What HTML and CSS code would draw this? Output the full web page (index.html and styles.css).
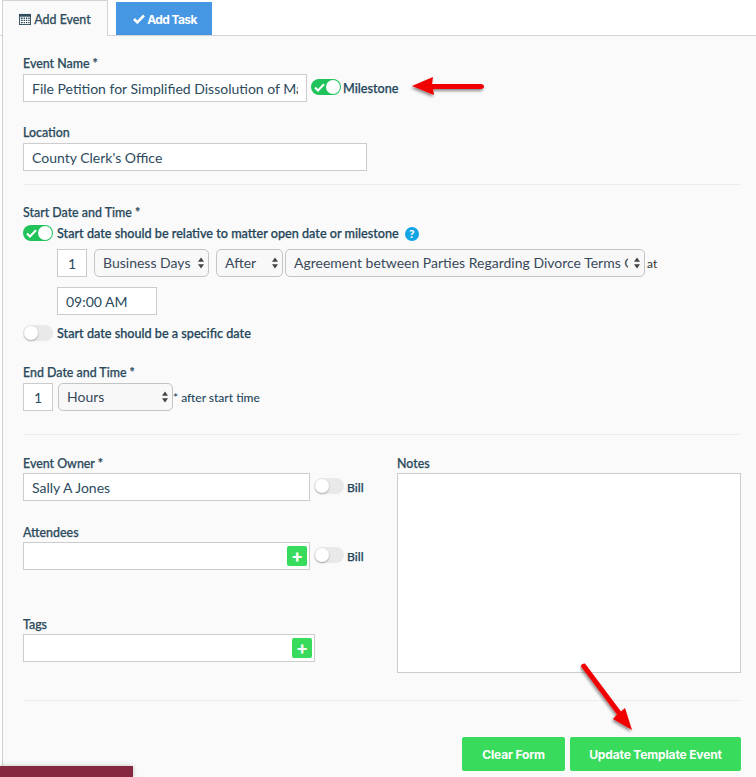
FILE: index.html
```html
<!DOCTYPE html>
<html lang="en">
<head>
<meta charset="utf-8">
<title>Add Event</title>
<link rel="stylesheet" href="styles.css">
</head>
<body>
<div class="page">
  <nav class="tabs">
    <a class="tab tab-active">
      <svg class="tab-icon" viewBox="0 0 13 13" width="12" height="12"><path fill="#2f4c5e" d="M0 1h13v12H0z"/><path fill="#fff" d="M1 4h11v8H1z"/><path fill="#2f4c5e" d="M2 5h2v1.500H2zM5 5h1.500v1.500H5zM7.500 5H9v1.500H7.500zM10 5h1.500v1.500H10zM2 7.300h2v1.500H2zM5 7.300h1.500v1.500H5zM7.500 7.300H9v1.500H7.500zM10 7.300h1.500v1.500H10zM2 9.700h2v1.500H2zM5 9.700h1.500v1.500H5zM7.500 9.700H9v1.500H7.500zM10 9.700h1.500v1.500H10z"/></svg>
      Add Event
    </a>
    <a class="tab tab-blue">
      <svg class="tab-icon" viewBox="0 0 12 10" width="12" height="10"><path fill="none" stroke="#fff" stroke-width="2.600" d="M1 5l3.300 3.300L11 1.500"/></svg>
      Add Task
    </a>
  </nav>
  <main class="panel">
    <div class="label first">Event Name *</div>
    <div class="row row-name">
      <input class="input w-name" value="File Petition for Simplified Dissolution of Marriage">
      <span class="toggle on"><svg viewBox="0 0 12 10" width="11" height="9"><path fill="none" stroke="#fff" stroke-width="2.400" d="M1 5l3.300 3.300L11 1.500"/></svg><i></i></span>
      <span class="opt">Milestone</span>
    </div>
    <div class="label gap-field">Location</div>
    <input class="input w-loc" value="County Clerk's Office">
    <hr class="rule rule-a">
    <div class="label">Start Date and Time *</div>
    <div class="row row-toggle">
      <span class="toggle on"><svg viewBox="0 0 12 10" width="11" height="9"><path fill="none" stroke="#fff" stroke-width="2.400" d="M1 5l3.300 3.300L11 1.500"/></svg><i></i></span>
      <span class="opt">Start date should be relative to matter open date or milestone</span>
      <span class="help">?</span>
    </div>
    <div class="row row-rel">
      <input class="input w-num center" value="1">
      <span class="sel w-unit"><select><option>Business Days</option></select><svg viewBox="0 0 7 13" width="6" height="12"><path fill="#444" d="M3.500 0L7 5H0zM3.500 13L0 8h7z"/></svg></span>
      <span class="sel w-after"><select><option>After</option></select><svg viewBox="0 0 7 13" width="6" height="12"><path fill="#444" d="M3.500 0L7 5H0zM3.500 13L0 8h7z"/></svg></span>
      <span class="sel w-mile"><select><option>Agreement between Parties Regarding Divorce Terms Complete</option></select><svg viewBox="0 0 7 13" width="6" height="12"><path fill="#444" d="M3.500 0L7 5H0zM3.500 13L0 8h7z"/></svg></span>
      <span class="at">at</span>
    </div>
    <div class="row-time"><input class="input w-time" value="09:00 AM"></div>
    <div class="row row-toggle row-spec">
      <span class="toggle"><i></i></span>
      <span class="opt">Start date should be a specific date</span>
    </div>
    <div class="label gap-end">End Date and Time *</div>
    <div class="row row-end">
      <input class="input w-num-b center" value="1">
      <span class="sel w-hours"><select><option>Hours</option></select><svg viewBox="0 0 7 13" width="6" height="12"><path fill="#444" d="M3.500 0L7 5H0zM3.500 13L0 8h7z"/></svg></span>
      <span class="after">* after start time</span>
    </div>
    <hr class="rule rule-b">
    <div class="cols">
      <div class="col-left">
        <div class="label tight">Event Owner *</div>
        <div class="row row-bill">
          <input class="input w-owner" value="Sally A Jones">
          <span class="toggle"><i></i></span>
          <span class="opt bill">Bill</span>
        </div>
        <div class="label tight gap-att">Attendees</div>
        <div class="row row-bill">
          <div class="input picker w-owner"><span class="plus">+</span></div>
          <span class="toggle"><i></i></span>
          <span class="opt bill">Bill</span>
        </div>
        <div class="label tight gap-tags">Tags</div>
        <div class="input picker w-tags"><span class="plus">+</span></div>
      </div>
      <div class="col-right">
        <div class="label tight">Notes</div>
        <textarea class="notes"></textarea>
      </div>
    </div>
    <hr class="rule rule-c">
    <div class="actions">
      <button class="btn btn-clear">Clear Form</button>
      <button class="btn btn-update">Update Template Event</button>
    </div>
  </main>
  <svg class="arrow arrow-mile" viewBox="0 0 80 26" width="80" height="26"><defs><filter id="s1" x="-20%" y="-40%" width="140%" height="200%"><feDropShadow dx="-1" dy="2" stdDeviation="1.500" flood-color="#000" flood-opacity=".45"/></filter></defs><path filter="url(#s1)" fill="#f00000" d="M3 11L24 2L23 9L72 9q3 .5 3 2.500t-3 2.500L24 14L25 20z"/></svg>
  <svg class="arrow arrow-btn" viewBox="0 0 60 74" width="60" height="74"><defs><filter id="s2" x="-30%" y="-20%" width="160%" height="140%"><feDropShadow dx="-1" dy="2" stdDeviation="1.500" flood-color="#000" flood-opacity=".45"/></filter></defs><path filter="url(#s2)" fill="#f00000" d="M1 3.500Q1 .5 5 .5L41 48.500L45 45L52 67L33 56L37 51.500z"/></svg>
  <div class="footer-bar"></div>
</div>
</body>
</html>
```
FILE: styles.css
```css
* { box-sizing: border-box; }
html, body { margin: 0; padding: 0; }
body { background: #fff; font-family: "Lato", "Liberation Sans", sans-serif; color: #2b4557; }
.page { position: relative; width: 756px; height: 777px; overflow: hidden; }

.tabs { display: flex; align-items: flex-end; height: 36px; padding-left: 2px; border-bottom: 1px solid #d4d4d4; }
.tab { display: flex; align-items: center; justify-content: center; gap: 3px; font-size: 12px; padding-top: 1px; }
.tab-active { width: 106px; height: 36px; margin-bottom: -1px; background: #fafafa; border: 1px solid #d4d4d4; border-bottom: 0; color: #2f4c5e; font-size: 12.400px; font-weight: 500; -webkit-text-stroke: .25px currentColor; }
.tab-blue { width: 96px; height: 33px; margin: 0 0 0 8px; padding-left: 2px; gap: 2px; background: #4596e3; color: #fff; font-family: "Inter", sans-serif; font-weight: 700; letter-spacing: -.6px; }
.tab-icon { flex: none; }

.panel { height: 741px; margin-left: 2px; padding: 18px 15px 0 20px; background: #fafafa; border-left: 1px solid #cfcfcf; }
.label { height: 18px; margin-bottom: 2px; font-size: 12.400px; line-height: 19px; font-weight: 500; color: #2b4a5d; -webkit-text-stroke: .25px currentColor; }
.label.tight { margin-bottom: 1px; }
.gap-field { margin-top: 21px; }
.gap-end { margin-top: 22px; }
.gap-att { margin-top: 22px; }
.gap-tags { margin-top: 45px; }

.input { display: block; height: 28px; padding: 0 8px; background: #fff; border: 1px solid #ccc; border-radius: 0; font: 14px "Lato", sans-serif; color: #2b4a5d; outline: 0; }
.center { text-align: center; padding: 0; }
.w-name { width: 284px; }
.w-loc { width: 344px; }
.w-num { width: 30px; }
.w-num-b { width: 30px; }
.w-time { width: 100px; }
.w-owner { width: 287px; }
.w-tags { width: 292px; }

.row { display: flex; align-items: center; }
.row-name .toggle { margin: 0 0 2px 4px; }
.row-name .opt { margin-left: 2px; }
.row-toggle { height: 16px; margin-top: 4px; }
.row-toggle .opt { margin-left: 4px; }
.row-rel { margin-top: 8px; padding-left: 34px; }
.row-time { margin-top: 10px; padding-left: 34px; }
.row-spec { margin-top: 10px; }
.row-end .sel { margin-left: 5px; }
.row-bill .toggle { margin: 0 0 2px 4px; }
.row-bill .opt { margin-left: 3px; }

.opt { padding-top: 2px; font-size: 12.650px; font-weight: 500; line-height: 16px; color: #24465a; white-space: nowrap; -webkit-text-stroke: .25px currentColor; }
.opt.bill { font-size: 12.200px; }
.toggle { position: relative; flex: none; display: block; width: 30px; height: 16px; border-radius: 8px; background: #e9e9e9; }
.toggle i { position: absolute; left: 0; top: 0; width: 14px; height: 14px; margin: 1px; border-radius: 50%; background: #fff; box-shadow: 0 1px 2px rgba(0,0,0,.3); }
.toggle.on { background: #20c25a; }
.toggle.on i { left: 14px; box-shadow: none; }
.toggle svg { position: absolute; left: 3px; top: 4px; }
.help { flex: none; width: 14px; height: 14px; margin: 2px 0 0 6px; border-radius: 50%; background: #12a5e6; color: #fff; font-size: 12px; font-weight: 900; line-height: 14px; text-align: center; }

.sel { position: relative; display: block; flex: none; height: 28px; }
.sel select { display: block; width: 100%; height: 28px; padding: 0 16px 2px 8px; appearance: none; background: #f8f8f8; border: 1px solid #c4c4c4; border-radius: 5px; font: 14px "Lato", sans-serif; color: #39495a; outline: 0; }
.sel svg { position: absolute; right: 5px; top: 8px; }
.w-unit { width: 115px; margin-left: 7px; }
.w-after { width: 67px; margin-left: 7px; }
.w-mile { width: 360px; margin-left: 2px; }
.w-hours { width: 115px; }
.at { margin-left: 2px; font-size: 12px; color: #333; }
.after { font-size: 12px; font-weight: 500; color: #24465a; }

.rule { display: block; margin: 0; height: 1px; border: 0; background: #ededed; }
.rule-a { margin: 13px 0 18px; }
.rule-b { margin: 23px 0 19px; }
.rule-c { margin-top: 27px; }

.cols { display: flex; }
.col-left { width: 374px; }
.col-right { width: 344px; }
.notes { display: block; width: 344px; height: 200px; padding: 8px; background: #fff; border: 1px solid #ccc; border-radius: 0; outline: 0; resize: none; }
.picker { display: flex; align-items: center; justify-content: flex-end; padding: 0 2px; }
.plus { display: block; width: 20px; height: 20px; border-radius: 2px; background: #39db5c; color: #fff; font: 700 18px/19px "Inter", sans-serif; text-align: center; }

.actions { display: flex; justify-content: flex-end; gap: 5px; margin-top: 36px; }
.btn { height: 34px; padding: 0; background: #39db5c; border: 0; border-radius: 2px; color: #fff; font: 700 12px "Inter", sans-serif; letter-spacing: -.15px; }
.btn-clear { width: 103px; }
.btn-update { width: 171px; }

.arrow { position: absolute; }
.arrow-mile { left: 409px; top: 75px; }
.arrow-btn { left: 580px; top: 663px; }
.footer-bar { position: absolute; left: 0; bottom: 0; width: 133px; height: 11px; background: #862840; box-shadow: 0 0 4px rgba(0,0,0,.25); }
```
